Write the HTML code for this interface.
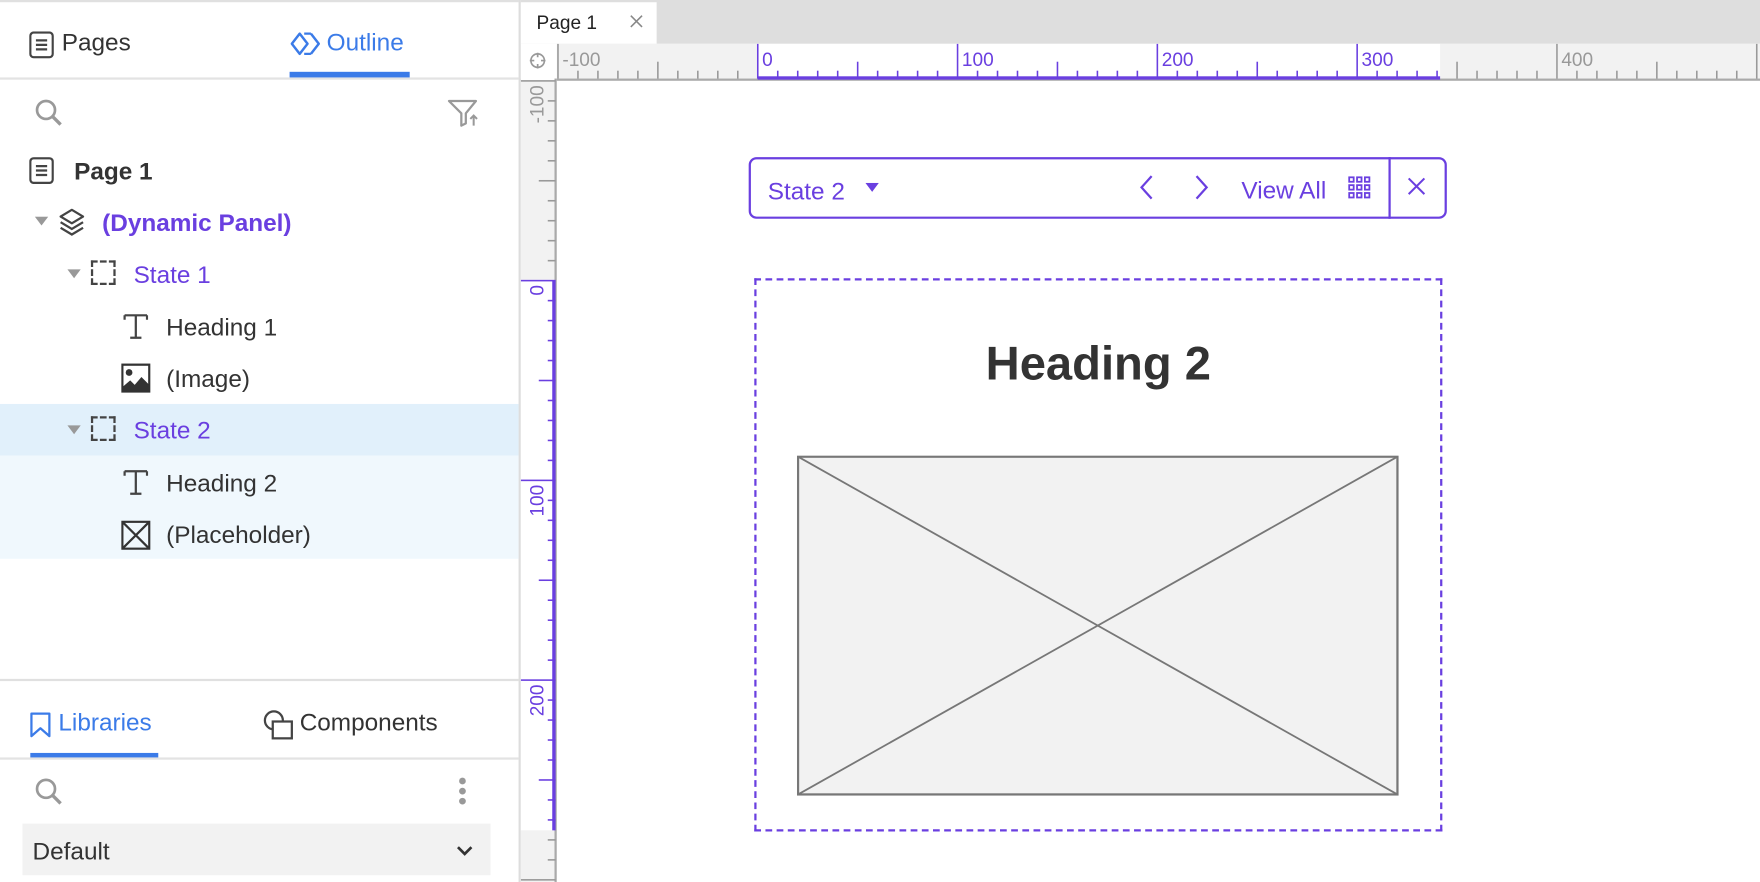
<!DOCTYPE html>
<html><head><meta charset="utf-8"><style>
html,body{margin:0;padding:0;width:1760px;height:882px;overflow:hidden;background:#fff}
#w{position:absolute;left:0;top:0;width:1568px;height:786px;transform:scale(1.12245,1.1221);transform-origin:0 0;font-family:"Liberation Sans",sans-serif;color:#333}
.a{position:absolute}
.t{font-size:21.7px;white-space:nowrap}
.p{color:#6a3fe0}
.b{color:#3b7be8}
</style></head><body><div id="w">
<div class="a" style="left:0;top:0;width:462px;height:2px;background:#e0e0e0"></div>
<div class="a" style="left:462px;top:0;width:2px;height:786px;background:#ddd"></div>
<div class="a" style="left:0;top:69px;width:462px;height:2px;background:#e3e3e3"></div>
<svg class="a" style="left:26px;top:28px" width="22" height="24"><rect x="1" y="1" width="20" height="22" rx="3" fill="none" stroke="#444" stroke-width="2"/><path d="M6 8h10M6 12h10M6 16h10" stroke="#444" stroke-width="2"/></svg>
<div class="a t" style="left:55px;top:25px">Pages</div>
<svg class="a" style="left:258px;top:28px" width="28" height="22"><path d="M9 2L2 11l7 9 7-9z M19 2l7 9-7 9" fill="none" stroke="#3b7be8" stroke-width="2.2" stroke-linejoin="round"/><path d="M13 2h6" stroke="#3b7be8" stroke-width="2"/><path d="M13 20h6" stroke="#3b7be8" stroke-width="2"/></svg>
<div class="a t b" style="left:291px;top:25px">Outline</div>
<div class="a" style="left:258px;top:64px;width:107px;height:5px;background:#3b7be8"></div>
<svg class="a" style="left:30px;top:87px" width="28" height="28"><circle cx="11" cy="11" r="8" fill="none" stroke="#999" stroke-width="2.4"/><path d="M17 17l7 7" stroke="#999" stroke-width="3"/></svg>
<svg class="a" style="left:398px;top:88px" width="30" height="26"><path d="M2 2h24l-9 11v9l-4 2V13z" fill="none" stroke="#999" stroke-width="2" stroke-linejoin="round"/><path d="M24 24v-9m-3 3l3-3 3 3" fill="none" stroke="#999" stroke-width="1.8"/></svg>
<svg class="a" style="left:26px;top:140px" width="22" height="24"><rect x="1" y="1" width="20" height="22" rx="3" fill="none" stroke="#444" stroke-width="2"/><path d="M6 8h10M6 12h10M6 16h10" stroke="#444" stroke-width="2"/></svg>
<div class="a t" style="left:66px;top:140px;font-weight:bold">Page 1</div>
<svg class="a" style="left:31px;top:193px" width="12" height="10"><path d="M0 0h12L6 8z" fill="#999"/></svg>
<svg class="a" style="left:52px;top:185px" width="26" height="26"><path d="M12 2l10 6-10 6L2 8z" fill="none" stroke="#444" stroke-width="2" stroke-linejoin="round"/><path d="M2 13l10 6 10-6M2 18l10 6 10-6" fill="none" stroke="#444" stroke-width="2"/></svg>
<div class="a t p" style="left:91px;top:186px;font-weight:bold">(Dynamic Panel)</div>
<div class="a" style="left:0;top:360px;width:462px;height:46px;background:#e1f0fb"></div>
<div class="a" style="left:0;top:406px;width:462px;height:92px;background:#f0f8fd"></div>
<svg class="a" style="left:60px;top:240px" width="12" height="10"><path d="M0 0h12L6 8z" fill="#999"/></svg>
<div class="a" style="left:81px;top:232px;width:22px;height:22px;border:2px dashed #444;box-sizing:border-box"></div>
<div class="a t p" style="left:119px;top:232px">State 1</div>
<svg class="a" style="left:60px;top:379px" width="12" height="10"><path d="M0 0h12L6 8z" fill="#999"/></svg>
<div class="a" style="left:81px;top:371px;width:22px;height:22px;border:2px dashed #444;box-sizing:border-box"></div>
<div class="a t p" style="left:119px;top:371px">State 2</div>
<svg class="a" style="left:110px;top:279px" width="22" height="24"><path d="M1 2h20M11 2v20M6 22h10M1 2v4M21 2v4" fill="none" stroke="#444" stroke-width="2"/></svg>
<div class="a t" style="left:148px;top:279px">Heading 1</div>
<svg class="a" style="left:108px;top:324px" width="26" height="26"><rect x="1" y="1" width="24" height="24" fill="none" stroke="#333" stroke-width="2"/><circle cx="7" cy="8" r="3" fill="#333"/><path d="M1 21l7-6 4 4 6-7 7 7v6H1z" fill="#333"/></svg>
<div class="a t" style="left:148px;top:325px">(Image)</div>
<svg class="a" style="left:110px;top:418px" width="22" height="24"><path d="M1 2h20M11 2v20M6 22h10M1 2v4M21 2v4" fill="none" stroke="#444" stroke-width="2"/></svg>
<div class="a t" style="left:148px;top:418px">Heading 2</div>
<svg class="a" style="left:108px;top:464px" width="26" height="26"><rect x="1" y="1" width="24" height="24" fill="none" stroke="#333" stroke-width="2"/><path d="M1 1l24 24M25 1L1 25" stroke="#333" stroke-width="2"/></svg>
<div class="a t" style="left:148px;top:464px">(Placeholder)</div>
<div class="a" style="left:0;top:605px;width:462px;height:2px;background:#e0e0e0"></div>
<svg class="a" style="left:26px;top:634px" width="20" height="24"><path d="M2 2h16v20l-8-7-8 7z" fill="none" stroke="#3b7be8" stroke-width="2" stroke-linejoin="round"/></svg>
<div class="a t b" style="left:52px;top:631px">Libraries</div>
<div class="a" style="left:27px;top:671px;width:114px;height:5px;background:#3b7be8"></div>
<svg class="a" style="left:234px;top:632px" width="28" height="28"><circle cx="10" cy="10" r="8" fill="none" stroke="#444" stroke-width="2"/><rect x="9" y="11" width="17" height="15" fill="#fff" stroke="#444" stroke-width="2"/></svg>
<div class="a t" style="left:267px;top:631px">Components</div>
<div class="a" style="left:0;top:675px;width:462px;height:2px;background:#e3e3e3"></div>
<svg class="a" style="left:30px;top:692px" width="28" height="28"><circle cx="11" cy="11" r="8" fill="none" stroke="#999" stroke-width="2.4"/><path d="M17 17l7 7" stroke="#999" stroke-width="3"/></svg>
<svg class="a" style="left:406px;top:692px" width="12" height="28"><circle cx="6" cy="4" r="3" fill="#999"/><circle cx="6" cy="13" r="3" fill="#999"/><circle cx="6" cy="22" r="3" fill="#999"/></svg>
<div class="a" style="left:20px;top:734px;width:417px;height:46px;background:#f2f2f2"></div>
<div class="a t" style="left:29px;top:746px">Default</div>
<svg class="a" style="left:406px;top:752px" width="16" height="12"><path d="M2 3l6 6 6-6" fill="none" stroke="#333" stroke-width="2.4"/></svg>
<div class="a" style="left:464px;top:0;width:1104px;height:39px;background:#dedede"></div>
<div class="a" style="left:464px;top:2px;width:121px;height:37px;background:#fff"></div>
<div class="a" style="left:478px;top:11px;font-size:17px;color:#222">Page 1</div>
<svg class="a" style="left:561px;top:13px" width="12" height="12"><path d="M1 1l10 10M11 1L1 11" stroke="#888" stroke-width="1.4"/></svg>
<svg id="rul" class="a" style="left:464px;top:39px" width="1104" height="747"></svg>
<div class="a" style="left:667px;top:140px;width:622px;height:55px;border:2px solid #6a3fe0;border-radius:7px;box-sizing:border-box"></div>
<div class="a" style="left:1237px;top:140px;width:2px;height:55px;background:#6a3fe0"></div>
<div class="a t p" style="left:684px;top:158px">State 2</div>
<svg class="a" style="left:771px;top:163px" width="12" height="9"><path d="M0 0h12L6 8z" fill="#6a3fe0"/></svg>
<svg class="a" style="left:1013px;top:155px" width="70" height="24"><path d="M13 2L4 12l9 10M53 2l9 10-9 10" fill="none" stroke="#6a3fe0" stroke-width="2"/></svg>
<div class="a t p" style="left:1106px;top:157px">View All</div>
<svg class="a" style="left:1201px;top:157px" width="20" height="20"><g fill="none" stroke="#6a3fe0" stroke-width="1.6"><rect x="1" y="1" width="4" height="4"/><rect x="8" y="1" width="4" height="4"/><rect x="15" y="1" width="4" height="4"/><rect x="1" y="8" width="4" height="4"/><rect x="8" y="8" width="4" height="4"/><rect x="15" y="8" width="4" height="4"/><rect x="1" y="15" width="4" height="4"/><rect x="8" y="15" width="4" height="4"/><rect x="15" y="15" width="4" height="4"/></g></svg>
<svg class="a" style="left:1254px;top:158px" width="16" height="16"><path d="M1 1l14 14M15 1L1 15" stroke="#6a3fe0" stroke-width="1.8"/></svg>
<div class="a" style="left:672px;top:248px;width:613px;height:493px;border:2px dashed #6a3fe0;box-sizing:border-box"></div>
<div class="a" style="left:672px;top:300px;width:613px;text-align:center;font-size:42px;font-weight:bold;color:#333">Heading 2</div>
<svg class="a" style="left:710px;top:406px" width="537" height="304"><rect x="1" y="1" width="534" height="301" fill="#f2f2f2" stroke="#777" stroke-width="2"/><path d="M1 1L535 302M535 1L1 302" stroke="#777" stroke-width="1.6"/></svg>
</div>
<script>
var s=document.getElementById('rul'),h='',P='#6a3fe0',G='#999';
h+='<rect x="0" y="0" width="1104" height="31" fill="#f2f2f2"/>';
h+='<rect x="211" y="0" width="608" height="31" fill="#fff"/>';
h+='<rect x="0" y="31" width="1104" height="2" fill="#aaa"/>';
h+='<rect x="211" y="29" width="608" height="3" fill="'+P+'"/>';
h+='<rect x="0" y="0" width="32" height="747" fill="#fff"/>';
h+='<rect x="0" y="33" width="31" height="714" fill="#f2f2f2"/>';
h+='<rect x="0" y="211" width="31" height="490" fill="#fff"/>';
h+='<rect x="30" y="31" width="2" height="716" fill="#aaa"/>';
h+='<rect x="28" y="211" width="3" height="490" fill="'+P+'"/>';
h+='<circle cx="15" cy="15" r="6" fill="none" stroke="#999" stroke-width="1.5"/><path d="M15 8v4M15 18v4M8 15h4M18 15h4" stroke="#999" stroke-width="1.5"/>';
for(var v=-100;v<=500;v+=10){var x=211+v*1.78;if(x<33)continue;if(x>1104)break;var on=(v>=0&&v<=340),c=on?P:G,L=v%100==0?31:(v%50==0?15:7);
h+='<rect x="'+(x-0.6)+'" y="'+(31-L)+'" width="1.4" height="'+L+'" fill="'+c+'"/>';
if(v%100==0)h+='<text x="'+(x+4)+'" y="20" font-size="17" font-family="Liberation Sans" fill="'+c+'">'+v+'</text>';}
for(var v=-100;v<=300;v+=10){var y=211+v*1.78;if(y<33)continue;if(y>747)break;var on=(v>=0&&v<=276),c=on?P:G,L=v%100==0?31:(v%50==0?15:7);
h+='<rect x="'+(31-L)+'" y="'+(y-0.6)+'" width="'+L+'" height="1.4" fill="'+c+'"/>';
if(v%100==0)h+='<text transform="translate(20,'+(y+4)+') rotate(-90)" text-anchor="end" font-size="17" font-family="Liberation Sans" fill="'+c+'">'+v+'</text>';}
s.innerHTML=h;
</script>
</body></html>
